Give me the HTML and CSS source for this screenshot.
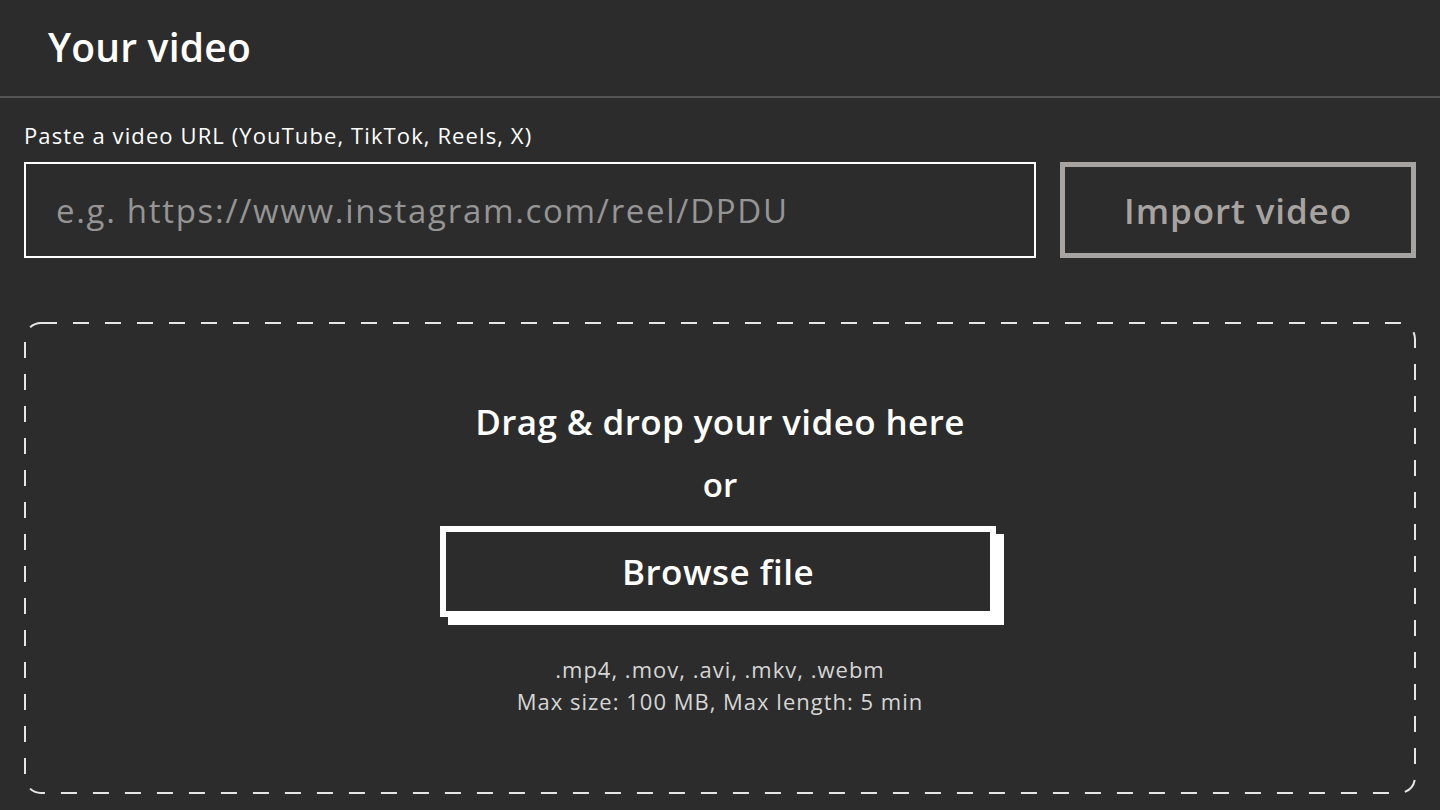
FILE: index.html
```html
<!DOCTYPE html>
<html lang="en">
<head>
<meta charset="utf-8">
<title>Your video</title>
<link rel="stylesheet" href="styles.css">
</head>
<body>
<header class="header">
  <h1 class="title">Your video</h1>
</header>
<main class="content">
  <label class="url-label" for="url">Paste a video URL (YouTube, TikTok, Reels, X)</label>
  <div class="url-row">
    <input id="url" class="url-input" type="text" placeholder="e.g. https://www.instagram.com/reel/DPDU">
    <button class="import-btn" type="button">Import video</button>
  </div>
  <section class="dropzone">
    <svg class="dash-frame" width="1392" height="472" viewBox="0 0 1392 472" aria-hidden="true">
      <rect x="1" y="1" width="1390" height="470" rx="16" ry="16" fill="none" stroke="#e6e6e6" stroke-width="2" stroke-dasharray="16 16"/>
    </svg>
    <p class="drop-title">Drag &amp; drop your video here</p>
    <p class="drop-or">or</p>
    <button class="browse-btn" type="button">Browse file</button>
    <p class="drop-hint">.mp4, .mov, .avi, .mkv, .webm<br>Max size: 100 MB, Max length: 5 min</p>
  </section>
</main>
</body>
</html>
```
FILE: styles.css
```css
* { box-sizing: border-box; }
html, body {
  margin: 0;
  padding: 0;
  background: #2c2c2c;
  color: #ffffff;
  font-family: "Open Sans", "Noto Sans", sans-serif;
}
body { width: 1440px; height: 810px; overflow: hidden; }

.header {
  height: 98px;
  border-bottom: 2px solid #555555;
  display: flex;
  align-items: center;
  padding-left: 48px;
}
.title {
  margin: 0;
  font-size: 39px;
  font-weight: 600;
  line-height: 46px;
  letter-spacing: 0.2px;
  padding-bottom: 2px;
}

.content {
  padding: 23px 24px 0 24px;
  display: flex;
  flex-direction: column;
}
.url-label {
  font-size: 22px;
  font-weight: 500;
  line-height: 28px;
  letter-spacing: 1.1px;
  color: #ffffff;
  margin-bottom: 13px;
}
.url-row {
  display: flex;
  gap: 24px;
  height: 96px;
}
.url-input {
  flex: 0 0 1012px;
  height: 96px;
  background: transparent;
  border: 2px solid #ffffff;
  border-radius: 0;
  padding: 0 30px;
  font-family: inherit;
  font-size: 33px;
  letter-spacing: 1.7px;
  color: #ffffff;
  outline: none;
}
.url-input::placeholder { color: #959595; }
.import-btn {
  flex: 1;
  height: 96px;
  background: transparent;
  border: 5px solid #a7a3a0;
  color: #a7a3a0;
  font-family: inherit;
  font-size: 35px;
  font-weight: 600;
  letter-spacing: 0.9px;
  padding: 0;
}

.dropzone {
  position: relative;
  margin-top: 64px;
  height: 472px;
  display: flex;
  flex-direction: column;
  align-items: center;
  padding-top: 77px;
}
.dash-frame {
  position: absolute;
  left: 0;
  top: 0;
}
.drop-title {
  margin: 0;
  font-size: 35px;
  font-weight: 600;
  line-height: 46px;
  letter-spacing: 0.4px;
}
.drop-or {
  margin: 20px 0 0 0;
  font-size: 33px;
  font-weight: 600;
  line-height: 40px;
}
.browse-btn {
  margin-top: 21px;
  margin-right: 4px;
  width: 556px;
  height: 91px;
  background: #2c2c2c;
  border: 6px solid #ffffff;
  box-shadow: 8px 8px 0 #ffffff;
  color: #ffffff;
  font-family: inherit;
  font-size: 35px;
  font-weight: 600;
  letter-spacing: 0.5px;
  padding: 0;
}
.drop-hint {
  margin: 36px 0 0 0;
  text-align: center;
  font-size: 22px;
  line-height: 32px;
  letter-spacing: 1px;
  color: #d6d6d6;
}
```
